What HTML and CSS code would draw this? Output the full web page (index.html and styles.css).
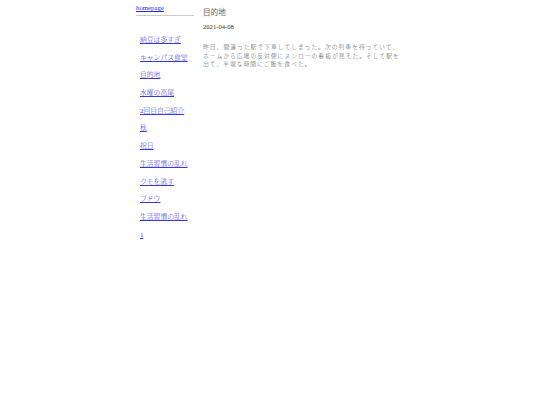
FILE: index.html
```html
<!DOCTYPE html>
<html lang="ja">
<head>
<meta charset="utf-8">
<title>目的地</title>
<link rel="stylesheet" href="styles.css">
</head>
<body>
<div class="page">
  <nav class="side">
    <a class="home" href="#">homepage</a>
    <ul class="links">
      <li><a href="#">納豆は多すぎ</a></li>
      <li><a href="#">キャンパス食堂</a></li>
      <li><a href="#">目的地</a></li>
      <li><a href="#">水曜の高尾</a></li>
      <li><a href="#">2回目自己紹介</a></li>
      <li><a href="#">秋</a></li>
      <li><a href="#">祝日</a></li>
      <li><a href="#">生活習慣の乱れ</a></li>
      <li><a href="#">クモを逃す</a></li>
      <li><a href="#">ブドウ</a></li>
      <li><a href="#">生活習慣の乱れ</a></li>
      <li><a href="#">1</a></li>
    </ul>
  </nav>
  <main class="main">
    <h1 class="title">目的地</h1>
    <div class="date">2021-04-08</div>
    <p class="text">昨日、間違った駅で下車してしまった。次の列車を待っていて、ホームから広場の反対側にスシローの看板が見えた。そして駅を出て、半端な時間にご飯を食べた。</p>
  </main>
</div>
</body>
</html>
```

FILE: styles.css
```css
html, body {
  margin: 0;
  padding: 0;
  background: #fff;
}

.page {
  display: flex;
  gap: 9px;
  width: 268px;
  margin: 0 auto;
  font-family: "Liberation Serif", "Noto Sans CJK JP", serif;
  font-size: 6.8px;
  color: #222;
}

.side {
  width: 58px;
  flex: none;
}

.home {
  display: block;
  padding-top: 4px;
  padding-bottom: 3px;
  line-height: 8px;
  border-bottom: 1px solid #ccc;
  color: #2a2ad8;
}

.links {
  list-style: none;
  margin: 0;
  padding: 0 0 0 4px;
  display: flex;
  flex-direction: column;
  gap: 9.7px;
  margin-top: 20px;
}

.links li {
  line-height: 8px;
}

.links a {
  color: #3a3ad8;
  font-weight: 300;
}

.main {
  flex: 1;
}

.title {
  margin: 7px 0 0;
  font-family: "Noto Sans CJK JP", "Noto Sans", sans-serif;
  font-weight: normal;
  font-size: 7.6px;
  line-height: 10px;
  color: #666;
}

.date {
  margin-top: 6px;
  font-size: 6.6px;
  line-height: 8px;
  color: #333;
}

.text {
  margin: 12px 0 0;
  font-family: "Noto Sans CJK JP", sans-serif;
  font-weight: 300;
  font-size: 5.8px;
  letter-spacing: 1px;
  line-height: 8.5px;
  color: #555;
}
```
